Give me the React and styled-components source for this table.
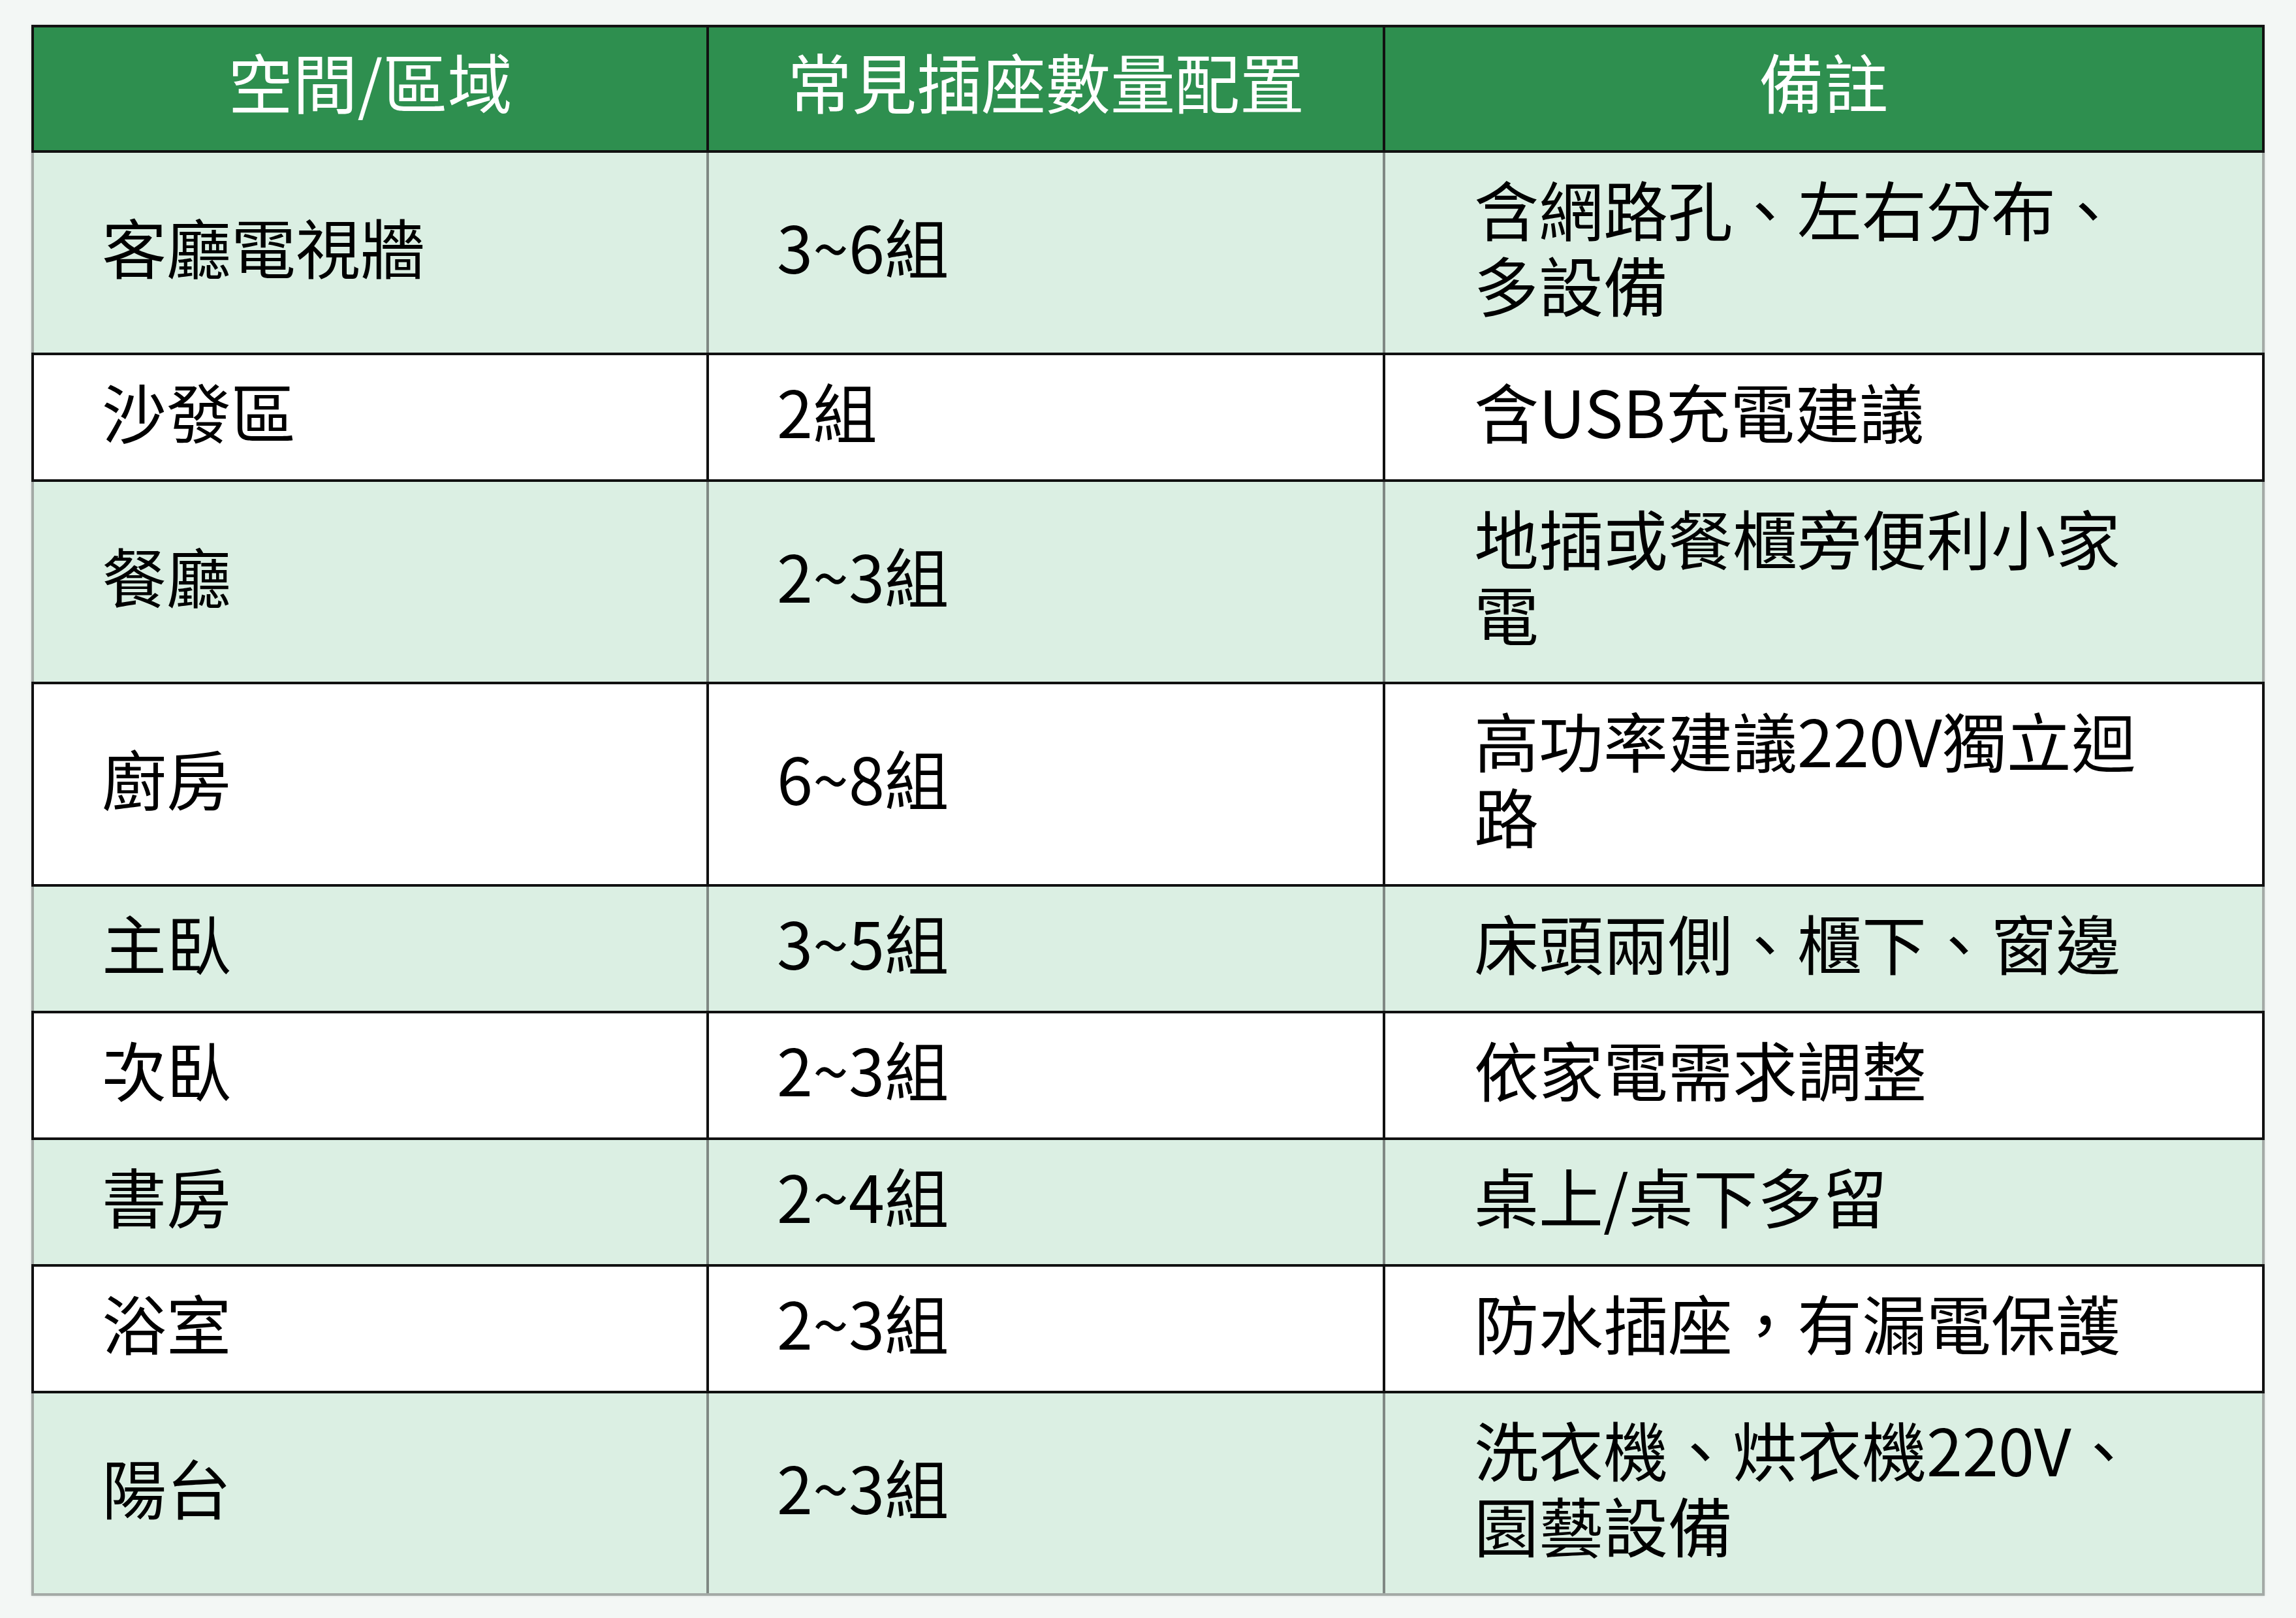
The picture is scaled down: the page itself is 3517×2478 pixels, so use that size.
import styled, { createGlobalStyle } from "styled-components";

const GlobalStyle = createGlobalStyle`
  html, body {
    margin: 0;
    padding: 0;
    background: #f3f7f5;
  }
  body {
    font-family: "Noto Sans CJK TC", "Noto Sans CJK SC", "Noto Sans", sans-serif;
  }
`;

const rows = [
  { area: "客廳電視牆", count: "3~6組", note: "含網路孔、左右分布、多設備" },
  { area: "沙發區", count: "2組", note: "含USB充電建議" },
  { area: "餐廳", count: "2~3組", note: "地插或餐櫃旁便利小家電" },
  { area: "廚房", count: "6~8組", note: "高功率建議220V獨立迴路" },
  { area: "主臥", count: "3~5組", note: "床頭兩側、櫃下、窗邊" },
  { area: "次臥", count: "2~3組", note: "依家電需求調整" },
  { area: "書房", count: "2~4組", note: "桌上/桌下多留" },
  { area: "浴室", count: "2~3組", note: "防水插座，有漏電保護" },
  { area: "陽台", count: "2~3組", note: "洗衣機、烘衣機220V、園藝設備" },
];

const Page = styled.div`
  padding: 38px 48px 40px 48px;
`;

const Table = styled.div`
  display: flex;
  flex-direction: column;
  box-shadow: 0 0 3px rgba(0, 0, 0, 0.15);
`;

const Row = styled.div`
  display: grid;
  grid-template-columns: 1038px 1036px 1fr;
  background: ${(p) => (p.$head ? "#2e8f4f" : p.$tint ? "#dbefe3" : "#ffffff")};
  border-top: ${(p) => (p.$head ? "4px solid #111" : "none")};
  border-bottom: 4px solid ${(p) => (p.$last ? "#a3aaa6" : "#111")};
`;

const Cell = styled.div`
  display: flex;
  align-items: center;
  justify-content: ${(p) => (p.$head ? "center" : "flex-start")};
  padding: ${(p) =>
    p.$head ? "23px 20px 49px" : p.$wide ? "26px 150px 48px 136px" : "26px 104px 48px"};
  font-size: 99px;
  line-height: 116px;
  color: ${(p) => (p.$head ? "#ffffff" : "#000000")};
  border-right: 4px solid ${(p) => (p.$tint ? "#7f8883" : "#111")};
  &:first-child {
    border-left: 4px solid ${(p) => (p.$tint ? "#a3aaa6" : "#111")};
  }
  &:last-child {
    border-right-color: ${(p) => (p.$tint ? "#a3aaa6" : "#111")};
  }
`;

export default function App() {
  return (
    <Page>
      <GlobalStyle />
      <Table>
        <Row $head>
          <Cell $head>空間/區域</Cell>
          <Cell $head>常見插座數量配置</Cell>
          <Cell $head>備註</Cell>
        </Row>
        {rows.map((r, i) => {
          const tint = i % 2 === 0;
          return (
            <Row key={r.area} $tint={tint} $last={i === rows.length - 1}>
              <Cell $tint={tint}>{r.area}</Cell>
              <Cell $tint={tint}>{r.count}</Cell>
              <Cell $tint={tint} $wide>
                {r.note}
              </Cell>
            </Row>
          );
        })}
      </Table>
    </Page>
  );
}
